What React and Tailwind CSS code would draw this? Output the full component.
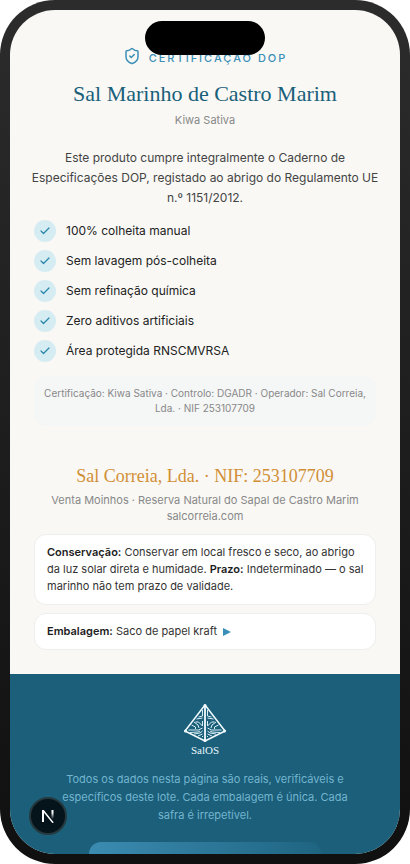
import React from 'react';
import { Check, ShieldCheck } from 'lucide-react';

const claims = [
  '100% colheita manual',
  'Sem lavagem pós-colheita',
  'Sem refinação química',
  'Zero aditivos artificiais',
  'Área protegida RNSCMVRSA',
];

const SalosLogo = () => (
  <svg viewBox="0 0 42 38" className="w-[42px] h-[38px]" fill="none" stroke="#f2fbff" strokeLinejoin="round" aria-hidden="true">
    <path d="M21 1 1 27l20 10 20-10z" strokeWidth="1.5" />
    <path d="M21 1v36" strokeWidth="1.8" />
    <g stroke="#d9eff6" strokeWidth="1">
      <path d="M18.5 6v6l-4 1M18.5 14l-6 1M18.5 17v5l-4-4-3 0M10 18l4 3 1 3M7.500 21l4 2v2M18.500 24l-4 2-10 0M6 28.500l8-.500 2-1M10 30l6-1 2.500-2M14 32l4.500-2M18.500 33v-1" />
      <path d="M23.500 6v6l4 1M23.500 14l6 1M23.500 17v5l4-4 3 0M32 18l-4 3-1 3M34.500 21l-4 2v2M23.500 24l4 2 10 0M36 28.500l-8-.500-2-1M32 30l-6-1-2.500-2M28 32l-4.500-2M23.500 33v-1" />
    </g>
    <g fill="#f2fbff" stroke="none">
      <circle cx="21" cy="1.5" r="1.5" />
      <circle cx="1.5" cy="27" r="1.5" />
      <circle cx="40.5" cy="27" r="1.5" />
      <circle cx="21" cy="36.5" r="1.5" />
    </g>
  </svg>
);

const Certification = () => (
  <section className="px-6 pt-9 text-center">
    <div className="flex items-center justify-center gap-2 text-[#3a8fb7]">
      <ShieldCheck className="w-[18px] h-[18px]" strokeWidth={2} />
      <p className="pt-1 text-[11px] leading-4 font-medium tracking-[2px]">CERTIFICAÇÃO DOP</p>
    </div>
    <h1 className="mt-3.5 font-['Liberation_Serif',serif] text-[22px] leading-7 font-medium text-[#1a5f7a]">
      Sal Marinho de Castro Marim
    </h1>
    <p className="mt-1 text-[11px] leading-4 text-[#888]">Kiwa Sativa</p>
    <p className="-mx-1 mt-5 text-xs leading-5 text-[#444]">
      Este produto cumpre integralmente o Caderno de Especificações DOP, registado ao abrigo do Regulamento UE n.º 1151/2012.
    </p>
    <ul className="mt-3 space-y-2">
      {claims.map((claim) => (
        <li key={claim} className="flex items-center gap-2.5 text-xs leading-5 text-[#222]">
          <span className="flex items-center justify-center w-[22px] h-[22px] rounded-full bg-[#d4ecf2] text-[#2b87ab]">
            <Check className="w-3 h-3" strokeWidth={2.5} />
          </span>
          {claim}
        </li>
      ))}
    </ul>
    <p className="mt-3.5 rounded-xl bg-[#f5f6f6] px-2 py-2.5 text-[10px] leading-[15px] text-[#888]">
      Certificação: Kiwa Sativa · Controlo: DGADR · Operador: Sal Correia, Lda. · NIF 253107709
    </p>
  </section>
);

const Producer = () => (
  <section className="px-6 pt-[34px] pb-6 text-center">
    <h2 className="font-['Liberation_Serif',serif] text-[18px] leading-8 font-medium text-[#d18f35]">
      Sal Correia, Lda. · NIF: 253107709
    </h2>
    <p className="text-[11px] leading-4 text-[#888]">Venta Moinhos · Reserva Natural do Sapal de Castro Marim</p>
    <a href="#site" className="block text-[11px] leading-4 text-[#888]">salcorreia.com</a>
    <div className="mt-2.5 space-y-2 text-left text-[11px] leading-[17px] text-[#333]">
      <p className="rounded-xl border border-[#eeeeec] bg-white pl-3 pr-2 py-[9px]">
        <strong className="font-semibold text-[#1c1c1c]">Conservação:</strong> Conservar em local fresco e seco, ao abrigo da luz solar direta e humidade.{' '}
        <strong className="font-semibold text-[#1c1c1c]">Prazo:</strong> Indeterminado — o sal marinho não tem prazo de validade.
      </p>
      <button type="button" className="flex w-full items-center gap-1.5 rounded-xl border border-[#eeeeec] bg-white px-3 py-[9px] text-left">
        <span><strong className="font-semibold text-[#1c1c1c]">Embalagem:</strong> Saco de papel kraft</span>
        <svg viewBox="0 0 8 8" className="w-2 h-2" fill="#3a8fb7" aria-hidden="true"><path d="M0 0l8 4-8 4z" /></svg>
      </button>
    </div>
  </section>
);

const Footer = () => (
  <footer className="flex flex-col items-center bg-[#1b5f7a] px-12 pt-[30px] text-center">
    <SalosLogo />
    <p className="font-['Liberation_Serif',serif] text-[11px] leading-4 text-[#e6f5fa]">SalOS</p>
    <p className="mt-3 text-[11px] leading-[18px] text-[#73b5cf]">
      Todos os dados nesta página são reais, verificáveis e específicos deste lote. Cada embalagem é única. Cada safra é irrepetível.
    </p>
    <button type="button" aria-label="Partilhar" className="mt-[18px] h-11 w-[232px] shrink-0 rounded-xl bg-linear-to-r from-[#3b8bb1] to-[#1f6582]" />
  </footer>
);

const App = () => (
  <div className="h-screen bg-white font-['Inter',sans-serif]">
    <div className="h-full rounded-[55px] bg-linear-to-b from-[#2c2c2c] to-[#101010] p-2.5">
      <div className="relative h-full overflow-hidden rounded-[45px] bg-[#f9f8f5]">
        <div className="absolute left-1/2 top-[11px] h-[34px] w-[120px] -translate-x-1/2 rounded-full bg-black" />
        <Certification />
        <Producer />
        <Footer />
        <button type="button" aria-label="Next.js" className="absolute bottom-[19px] left-[19px] flex h-[38px] w-[38px] items-center justify-center rounded-full border-2 border-[#26393f] bg-[#04141a]">
          <svg viewBox="0 0 14 14" className="h-3.5 w-3.5" fill="none" aria-hidden="true">
            <defs>
              <linearGradient id="stem" x1="0" y1="0" x2="0" y2="1">
                <stop offset="0.3" stopColor="white" />
                <stop offset="1" stopColor="white" stopOpacity="0" />
              </linearGradient>
            </defs>
            <path d="M1 13V1h1.800l10 12.500-1.500.5L3 3.800V13z" fill="white" />
            <rect x="10.500" y="1" width="2" height="9" fill="url(#stem)" />
          </svg>
        </button>
      </div>
    </div>
  </div>
);

export default App;
